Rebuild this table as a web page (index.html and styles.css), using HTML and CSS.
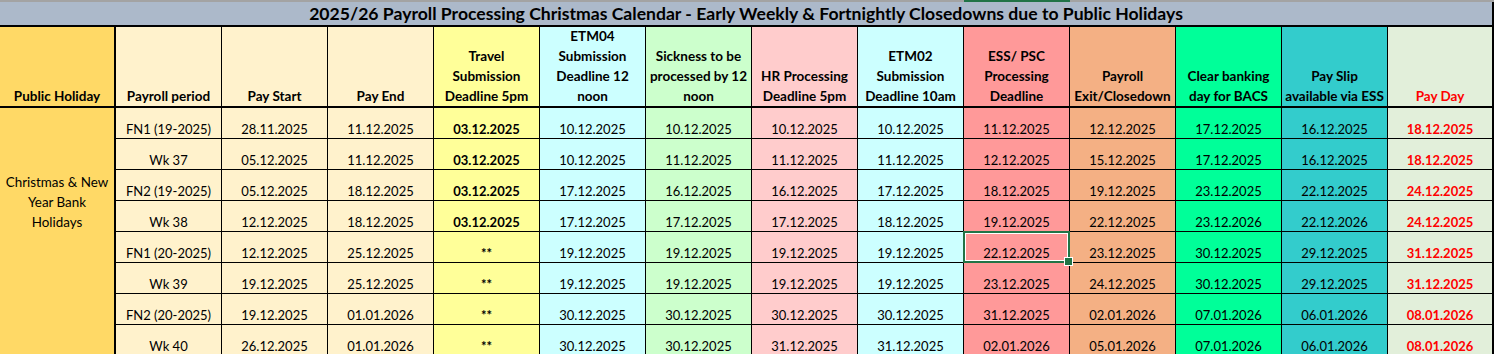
FILE: index.html
```html
<!DOCTYPE html>
<html lang="en">
<head>
<meta charset="utf-8">
<title>2025/26 Payroll Processing Christmas Calendar</title>
<link rel="stylesheet" href="styles.css">
</head>
<body>
<div class="sheet">
  <div class="topline"><span class="colmark"></span></div>
  <div class="title">2025/26 Payroll Processing Christmas Calendar - Early Weekly &amp; Fortnightly Closedowns due to Public Holidays</div>
  <div class="grid">
    <div class="h c-hol first">Public Holiday</div>
    <div class="h c-cream">Payroll period</div>
    <div class="h c-cream">Pay Start</div>
    <div class="h c-cream">Pay End</div>
    <div class="h c-travel">Travel<br>Submission<br>Deadline 5pm</div>
    <div class="h c-cyan">ETM04<br>Submission<br>Deadline 12<br>noon</div>
    <div class="h c-green">Sickness to be<br>processed by 12<br>noon</div>
    <div class="h c-pink">HR Processing<br>Deadline 5pm</div>
    <div class="h c-cyan">ETM02<br>Submission<br>Deadline 10am</div>
    <div class="h c-red">ESS/ PSC<br>Processing<br>Deadline</div>
    <div class="h c-orange">Payroll<br>Exit/Closedown</div>
    <div class="h c-mint">Clear banking<br>day for BACS</div>
    <div class="h c-teal">Pay Slip<br>available via ESS</div>
    <div class="h c-pay last">Pay Day</div>

    <div class="holiday c-hol">Christmas &amp; New<br>Year Bank<br>Holidays</div>

    <div class="d c-cream">FN1 (19-2025)</div><div class="d c-cream">28.11.2025</div><div class="d c-cream">11.12.2025</div><div class="d c-travel">03.12.2025</div><div class="d c-cyan">10.12.2025</div><div class="d c-green">10.12.2025</div><div class="d c-pink">10.12.2025</div><div class="d c-cyan">10.12.2025</div><div class="d c-red">11.12.2025</div><div class="d c-orange">12.12.2025</div><div class="d c-mint">17.12.2025</div><div class="d c-teal">16.12.2025</div><div class="d c-pay last">18.12.2025</div>

    <div class="d c-cream">Wk 37</div><div class="d c-cream">05.12.2025</div><div class="d c-cream">11.12.2025</div><div class="d c-travel">03.12.2025</div><div class="d c-cyan">10.12.2025</div><div class="d c-green">11.12.2025</div><div class="d c-pink">11.12.2025</div><div class="d c-cyan">11.12.2025</div><div class="d c-red">12.12.2025</div><div class="d c-orange">15.12.2025</div><div class="d c-mint">17.12.2025</div><div class="d c-teal">16.12.2025</div><div class="d c-pay last">18.12.2025</div>

    <div class="d c-cream">FN2 (19-2025)</div><div class="d c-cream">05.12.2025</div><div class="d c-cream">18.12.2025</div><div class="d c-travel">03.12.2025</div><div class="d c-cyan">17.12.2025</div><div class="d c-green">16.12.2025</div><div class="d c-pink">16.12.2025</div><div class="d c-cyan">17.12.2025</div><div class="d c-red">18.12.2025</div><div class="d c-orange">19.12.2025</div><div class="d c-mint">23.12.2025</div><div class="d c-teal">22.12.2025</div><div class="d c-pay last">24.12.2025</div>

    <div class="d c-cream">Wk 38</div><div class="d c-cream">12.12.2025</div><div class="d c-cream">18.12.2025</div><div class="d c-travel">03.12.2025</div><div class="d c-cyan">17.12.2025</div><div class="d c-green">17.12.2025</div><div class="d c-pink">17.12.2025</div><div class="d c-cyan">18.12.2025</div><div class="d c-red">19.12.2025</div><div class="d c-orange">22.12.2025</div><div class="d c-mint">23.12.2026</div><div class="d c-teal">22.12.2026</div><div class="d c-pay last">24.12.2025</div>

    <div class="d c-cream">FN1 (20-2025)</div><div class="d c-cream">12.12.2025</div><div class="d c-cream">25.12.2025</div><div class="d c-travel">**</div><div class="d c-cyan">19.12.2025</div><div class="d c-green">19.12.2025</div><div class="d c-pink">19.12.2025</div><div class="d c-cyan">19.12.2025</div><div class="d c-red sel">22.12.2025</div><div class="d c-orange">23.12.2025</div><div class="d c-mint">30.12.2025</div><div class="d c-teal">29.12.2025</div><div class="d c-pay last">31.12.2025</div>

    <div class="d c-cream">Wk 39</div><div class="d c-cream">19.12.2025</div><div class="d c-cream">25.12.2025</div><div class="d c-travel">**</div><div class="d c-cyan">19.12.2025</div><div class="d c-green">19.12.2025</div><div class="d c-pink">19.12.2025</div><div class="d c-cyan">19.12.2025</div><div class="d c-red">23.12.2025</div><div class="d c-orange">24.12.2025</div><div class="d c-mint">30.12.2025</div><div class="d c-teal">29.12.2025</div><div class="d c-pay last">31.12.2025</div>

    <div class="blank c-hol"></div>
    <div class="d c-cream">FN2 (20-2025)</div><div class="d c-cream">19.12.2025</div><div class="d c-cream">01.01.2026</div><div class="d c-travel">**</div><div class="d c-cyan">30.12.2025</div><div class="d c-green">30.12.2025</div><div class="d c-pink">30.12.2025</div><div class="d c-cyan">30.12.2025</div><div class="d c-red">31.12.2025</div><div class="d c-orange">02.01.2026</div><div class="d c-mint">07.01.2026</div><div class="d c-teal">06.01.2026</div><div class="d c-pay last">08.01.2026</div>

    <div class="blank c-hol"></div>
    <div class="d c-cream">Wk 40</div><div class="d c-cream">26.12.2025</div><div class="d c-cream">01.01.2026</div><div class="d c-travel">**</div><div class="d c-cyan">30.12.2025</div><div class="d c-green">30.12.2025</div><div class="d c-pink">31.12.2025</div><div class="d c-cyan">31.12.2025</div><div class="d c-red">02.01.2026</div><div class="d c-orange">05.01.2026</div><div class="d c-mint">07.01.2026</div><div class="d c-teal">06.01.2026</div><div class="d c-pay last">08.01.2026</div>
  </div>
</div>
</body>
</html>
```

FILE: styles.css
```css
* { box-sizing: border-box; }

html, body {
  margin: 0;
  padding: 0;
  background: #ffffff;
  overflow: hidden;
}

.sheet {
  width: 1494px;
  font-family: "Lato", "Liberation Sans", sans-serif;
  color: #000;
}

.topline {
  display: grid;
  grid-template-columns: 116px repeat(13, 106px);
  height: 2px;
  background: #a3a3a3;
}

.colmark {
  grid-column: 10;
  background: #217346;
}

.title {
  height: 25px;
  background: #acb9ca;
  border-bottom: 2px solid #000;
  border-right: 2px solid #000;
  text-align: center;
  font-weight: 700;
  font-size: 17.6px;
  line-height: 23px;
  white-space: nowrap;
}

.grid {
  display: grid;
  grid-template-columns: 116px repeat(13, 106px);
  grid-template-rows: 81px repeat(8, 31px);
}

.h,
.d,
.holiday,
.blank {
  border-right: 1px solid #000;
  font-size: 13px;
  text-align: center;
  white-space: nowrap;
}

.h {
  border-bottom: 2px solid #000;
  font-weight: 700;
  font-size: 13.5px;
  line-height: 20px;
  display: flex;
  flex-direction: column;
  justify-content: flex-end;
}

.d {
  border-bottom: 1px solid #000;
  line-height: 17px;
  display: flex;
  align-items: flex-end;
  justify-content: center;
}

.first,
.holiday,
.blank {
  border-right-width: 2px;
}

.last {
  border-right-width: 2px;
}

.holiday {
  grid-row: span 6;
  font-size: 13.4px;
  line-height: 20px;
  display: flex;
  align-items: center;
  justify-content: center;
  padding-top: 1px;
}

/* column fills */
.c-hol { background: #ffd966; }
.c-cream { background: #fff2cc; }
.c-travel { background: #ffff99; }
.c-travel.d { font-weight: 700; }
.c-cyan { background: #ccffff; }
.c-green { background: #ccffcc; }
.c-pink { background: #ffcccc; }
.c-red { background: #ff9999; }
.c-orange { background: #f4b084; }
.c-mint { background: #00ff99; }
.c-teal { background: #33cccc; }
.c-pay { background: #e2efda; color: #ff0000; }
.c-pay.d { font-weight: 700; }

/* active cell selection */
.sel {
  position: relative;
}

.sel::after {
  content: "";
  position: absolute;
  left: -1px;
  top: -1px;
  right: -1px;
  bottom: -1px;
  border: 2px solid #217346;
  box-shadow: inset 0 0 0 1px #ffffff;
}

.sel::before {
  content: "";
  position: absolute;
  right: -4px;
  bottom: -4px;
  width: 7px;
  height: 7px;
  background: #217346;
  border: 1px solid #ffffff;
  z-index: 2;
}
```
